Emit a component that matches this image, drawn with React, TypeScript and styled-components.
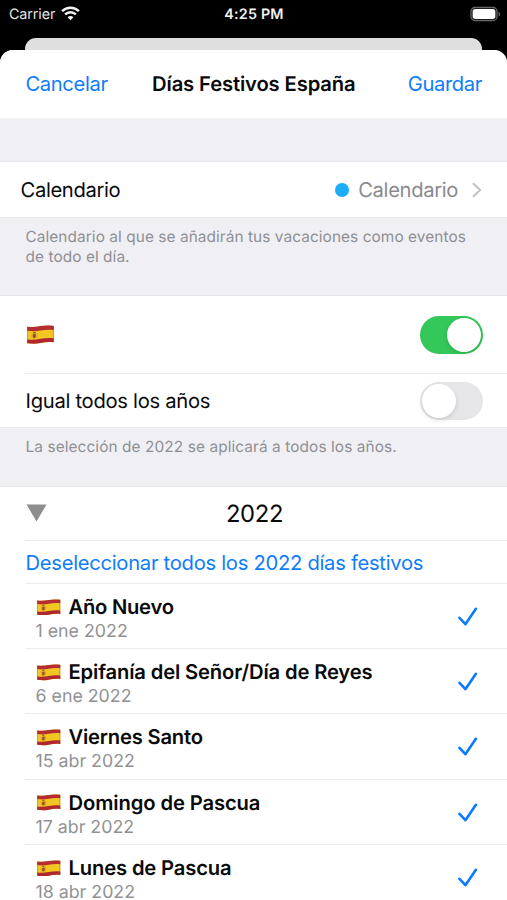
import React, { useState } from "react";
import styled, { createGlobalStyle } from "styled-components";

const GlobalStyle = createGlobalStyle`
  * { box-sizing: border-box; }
  body {
    margin: 0;
    background: #000;
    font-family: Inter, "Liberation Sans", sans-serif;
    font-size: 20.2px;
    line-height: 24px;
    text-rendering: geometricPrecision;
    -webkit-font-smoothing: antialiased;
  }
  button { font: inherit; border: 0; padding: 0; background: none; }
`;

const Screen = styled.div`
  width: 507px;
  height: 900px;
  overflow: hidden;
  background: #000;
  display: flex;
  flex-direction: column;
  color: #0a0a0a;
`;

const StatusBar = styled.header`
  height: 38px;
  flex: none;
  display: grid;
  grid-template-columns: 1fr auto 1fr;
  padding: 1px 7px 9px 9px;
  align-items: center;
  color: #fff;
  font-size: 14.3px;
`;

const Carrier = styled.div`
  display: flex;
  align-items: center;
  gap: 6px;
  letter-spacing: -0.1px;
  color: #e4e4e4;
`;

const WifiIcon = styled.svg`
  margin-top: -3px;
`;

const Clock = styled.time`
  margin-right: 1px;
  font-weight: 600;
  letter-spacing: 0.22px;
  color: #f0f0f0;
`;

const BatteryIcon = styled.svg`
  justify-self: end;
  margin: -2px -1px 0 0;
`;

const BackCard = styled.div`
  height: 12px;
  flex: none;
  margin: 0 25px;
  border-radius: 11px 11px 0 0;
  background: #dfdfdf;
`;

const SheetFrame = styled.div`
  flex: 1;
  min-height: 0;
  background: #000;
`;

const Sheet = styled.main`
  height: 850px;
  overflow: hidden;
  border-radius: 13px 13px 0 0;
  background: #efeff4;
`;

const NavBar = styled.nav`
  height: 69px;
  display: grid;
  grid-template-columns: 1fr auto 1fr;
  align-items: center;
  padding: 0 25px 0 25.5px;
  background: #fff;
  border-bottom: 1px solid #f4f4f6;
`;

const NavAction = styled.button<{ $end?: boolean }>`
  justify-self: ${(p) => (p.$end ? "end" : "start")};
  color: #0f7dfb;
  letter-spacing: -0.38px;
`;

const NavTitle = styled.h1`
  margin: 0;
  font-size: 20.2px;
  font-weight: 600;
  letter-spacing: -0.12px;
`;

const Group = styled.section<{ $gap?: number }>`
  margin-top: ${(p) => p.$gap ?? 0}px;
  background: #fff;
  border-top: 1px solid #e6e6ea;
  border-bottom: 1px solid #e9e9ee;
`;

const Row = styled.div<{ $height: number; $indent?: number }>`
  height: ${(p) => p.$height}px;
  display: flex;
  align-items: center;
  justify-content: space-between;
  padding: 0 24.5px 0 ${(p) => p.$indent ?? 25.5}px;
`;

const RowLabel = styled.span<{ $tracking: number }>`
  letter-spacing: ${(p) => p.$tracking}px;
`;

const Selection = styled.div`
  display: flex;
  align-items: center;
  letter-spacing: -0.35px;
  color: #8b8b8e;
`;

const CalendarDot = styled.i`
  width: 14px;
  height: 14px;
  margin-right: 9.5px;
  border-radius: 50%;
  background: #1badf8;
`;

const Chevron = styled.svg`
  margin: 0 1px 0 13.5px;
`;

const Divider = styled.hr`
  height: 1px;
  margin: 0 0 0 25px;
  border: 0;
  background: #ebebed;
`;

const Footnote = styled.p<{ $height: number; $tracking: number }>`
  height: ${(p) => p.$height}px;
  margin: 0;
  padding: 9px 25px 0 25.5px;
  font-size: 15.4px;
  line-height: 19.5px;
  letter-spacing: ${(p) => p.$tracking}px;
  color: #8f8f94;
`;

const Switch = styled.button<{ $on: boolean }>`
  width: 63px;
  height: 38px;
  padding: 2px;
  display: flex;
  justify-content: ${(p) => (p.$on ? "flex-end" : "flex-start")};
  border-radius: 19px;
  background: ${(p) => (p.$on ? "#34c759" : "#e6e6e9")};
`;

const Knob = styled.span`
  width: 34px;
  height: 34px;
  border-radius: 50%;
  background: #fff;
  box-shadow: 0 2px 5px rgba(0, 0, 0, 0.12);
`;

const YearHeader = styled.div`
  height: 53px;
  display: grid;
  grid-template-columns: 1fr auto 1fr;
  align-items: center;
  padding: 0 24px 0 26px;
  font-size: 23.8px;
  letter-spacing: -0.35px;
`;

const Disclosure = styled.svg`
  margin-top: -1px;
`;

const LinkRow = styled.button`
  width: 100%;
  height: 42px;
  display: flex;
  align-items: center;
  padding: 1px 25px 0 25.5px;
  letter-spacing: -0.28px;
  color: #0f7dfb;
`;

const HolidayRow = styled.div`
  height: 64.2px;
  display: flex;
  align-items: center;
  justify-content: space-between;
  padding: 2px 29px 0 36px;
`;

const HolidayText = styled.div`
  padding-top: 5px;
`;

const HolidayName = styled.div<{ $tracking: number }>`
  display: flex;
  align-items: center;
  gap: 8px;
  padding-left: 1px;
  font-weight: 600;
  letter-spacing: ${(p) => p.$tracking}px;
`;

const HolidayDate = styled.div`
  margin: 4px 0 4px -0.5px;
  font-size: 17.8px;
  line-height: 17px;
  color: #919193;
`;

const FlagSvg = styled.svg`
  flex: none;
  display: block;
`;

function Flag({ width, height }: { width: number; height: number }) {
  return (
    <FlagSvg width={width} height={height} viewBox="0 0 27 19" preserveAspectRatio="none">
      <path d="M.3 1.700C5 2.400 9 2 13.500 1.100S22 .3 26.700 .9v16.400c-4.700-.5-8.700-.2-13.200.7S5 18.900 .3 18.200z" fill="#f3c722" />
      <path d="M.3 1.700C5 2.400 9 2 13.500 1.100S22 .3 26.700 .9v4c-4.700-.5-8.700-.3-13.200.6S5 6.400 .3 5.700z" fill="#b52c31" />
      <path d="M.3 14.400c4.700.6 8.700.2 13.200-.6s8.500-1 13.200-.5v4c-4.700-.5-8.700-.2-13.200.7S5 18.900 .3 18.200z" fill="#b0282d" />
      <path d="M4.400 8.500h.9v4.500h-.9zM9.500 8.200h.9v4.500h-.9z" fill="#c0a060" />
      <path d="M5.800 8.900l3.100-.3v3.200c0 1.800-3.100 1.900-3.100.2z" fill="#a3512c" />
      <path d="M5.900 8.200c.2-1.600 2.700-1.700 2.900-.3z" fill="#74551f" />
      <path d="M.6 1.700v16.500M26.400 .9v16.400" stroke="#713d25" strokeOpacity=".5" strokeWidth=".8" />
    </FlagSvg>
  );
}

function Check() {
  return (
    <svg width="20" height="20" viewBox="0 0 20 20" fill="none">
      <path d="M1.500 10.800L7.400 17.200L17.900 1.800" stroke="#0a7aff" strokeWidth="2.600" strokeLinecap="round" strokeLinejoin="round" />
    </svg>
  );
}

function Wifi() {
  return (
    <WifiIcon width="19" height="15" viewBox="0 0 19 15" fill="none" stroke="#f4f4f4">
      <path d="M1.100 5.200C5.800.6 13.200.6 17.900 5.200" strokeWidth="2.500" />
      <path d="M4.100 8.400c3-2.900 7.800-2.900 10.800 0" strokeWidth="2.400" />
      <path d="M9.500 14.200L6.600 11.200c1.600-1.500 4.200-1.500 5.800 0z" fill="#f4f4f4" stroke="none" />
    </WifiIcon>
  );
}

const holidays = [
  { name: "Año Nuevo", date: "1 ene 2022", tracking: -0.25 },
  { name: "Epifanía del Señor/Día de Reyes", date: "6 ene 2022", tracking: -0.14 },
  { name: "Viernes Santo", date: "15 abr 2022", tracking: -0.2 },
  { name: "Domingo de Pascua", date: "17 abr 2022", tracking: -0.1 },
  { name: "Lunes de Pascua", date: "18 abr 2022", tracking: -0.14 },
];

export default function App() {
  const [country, setCountry] = useState(true);
  const [everyYear, setEveryYear] = useState(false);

  return (
    <Screen>
      <GlobalStyle />
      <StatusBar>
        <Carrier>
          Carrier
          <Wifi />
        </Carrier>
        <Clock>4:25 PM</Clock>
        <BatteryIcon width="31" height="16" viewBox="0 0 31 16">
          <rect x="1" y="1.500" width="26" height="13" rx="4" fill="none" stroke="#69696b" strokeWidth="1.300" />
          <rect x="2.600" y="3.100" width="22.800" height="9.800" rx="2.600" fill="#fff" />
          <path d="M28.600 5.700v4.600c2.100-.9 2.100-3.700 0-4.600z" fill="#69696b" />
        </BatteryIcon>
      </StatusBar>
      <BackCard />
      <SheetFrame>
        <Sheet>
          <NavBar>
            <NavAction>Cancelar</NavAction>
            <NavTitle>Días Festivos España</NavTitle>
            <NavAction $end>Guardar</NavAction>
          </NavBar>

          <Group $gap={42}>
            <Row $height={55} $indent={20.5}>
              <RowLabel $tracking={-0.35}>Calendario</RowLabel>
              <Selection>
                <CalendarDot />
                Calendario
                <Chevron width="10" height="16" viewBox="0 0 10 16" fill="none">
                  <path d="M1.500 1.800L8.200 8L1.500 14.200" stroke="#c2c2c5" strokeWidth="2" strokeLinecap="round" strokeLinejoin="round" />
                </Chevron>
              </Selection>
            </Row>
          </Group>
          <Footnote $height={77} $tracking={0.07}>
            Calendario al que se añadirán tus vacaciones como eventos de todo el día.
          </Footnote>

          <Group>
            <Row $height={77} $indent={27}>
              <Flag width={27} height={19} />
              <Switch $on={country} onClick={() => setCountry(!country)}>
                <Knob />
              </Switch>
            </Row>
            <Divider />
            <Row $height={53}>
              <RowLabel $tracking={-0.28}>Igual todos los años</RowLabel>
              <Switch $on={everyYear} onClick={() => setEveryYear(!everyYear)}>
                <Knob />
              </Switch>
            </Row>
          </Group>
          <Footnote $height={58} $tracking={0.09}>
            La selección de 2022 se aplicará a todos los años.
          </Footnote>

          <Group>
            <YearHeader>
              <Disclosure width="21" height="18" viewBox="0 0 21 18">
                <path d="M.5.500h20L10.500 17.500z" fill="#8e8e8e" />
              </Disclosure>
              <span>2022</span>
            </YearHeader>
            <Divider />
            <LinkRow>Deseleccionar todos los 2022 días festivos</LinkRow>
            <Divider />
            {holidays.map((h) => (
              <React.Fragment key={h.name}>
                <HolidayRow>
                  <HolidayText>
                    <HolidayName $tracking={h.tracking}>
                      <Flag width={23.500} height={16.500} />
                      {h.name}
                    </HolidayName>
                    <HolidayDate>{h.date}</HolidayDate>
                  </HolidayText>
                  <Check />
                </HolidayRow>
                <Divider />
              </React.Fragment>
            ))}
          </Group>
        </Sheet>
      </SheetFrame>
    </Screen>
  );
}
